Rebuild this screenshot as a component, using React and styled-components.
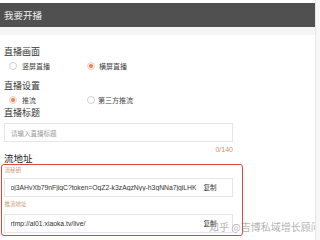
import React from "react";
import styled, { createGlobalStyle } from "styled-components";

const GlobalStyle = createGlobalStyle`
  body {
    margin: 0;
    background: #f7f7f7;
    font-family: "Noto Sans CJK SC", "Noto Sans", sans-serif;
  }
`;

const Page = styled.div`
  width: 316px;
  height: 240px;
  padding-top: 3px;
  box-sizing: border-box;
  background: #fff;
  border-right: 1px solid #e6e6e6;
  position: relative;
  overflow: hidden;
`;

const Header = styled.div`
  height: 24px;
  background: #505050;
  color: #f2f2f2;
  font-size: 9.5px;
  display: flex;
  align-items: center;
  padding-left: 4px;
`;

const SubBar = styled.div`
  height: 8px;
  background: #f6f5f6;
`;

const Content = styled.div`
  padding: 0 4px;
`;

const Label = styled.div`
  font-size: 9px;
  color: #333;
  line-height: 14px;
  height: 14px;
  margin-top: ${(p) => p.top || 0}px;
`;

const RadioRow = styled.div`
  display: flex;
  padding-left: 5px;
  height: 14px;
  align-items: center;
`;

const RadioItem = styled.div`
  width: 78px;
  display: flex;
  align-items: center;
  font-size: 7px;
  color: #444;
`;

const Circle = styled.span`
  width: 8px;
  height: 8px;
  box-sizing: border-box;
  border-radius: 50%;
  border: 1px solid ${(p) => (p.on ? "#f3d2c0" : "#cfcfcf")};
  background: ${(p) => (p.on ? "#fcece3" : "#fff")};
  display: flex;
  align-items: center;
  justify-content: center;
  margin-right: ${(p) => p.gap}px;
  &::after {
    content: "";
    display: ${(p) => (p.on ? "block" : "none")};
    width: 4px;
    height: 4px;
    border-radius: 50%;
    background: #db8761;
  }
`;

const Input = styled.div`
  width: 229px;
  height: 19px;
  box-sizing: border-box;
  border: 1px solid #e6e6e6;
  display: flex;
  align-items: center;
  padding-left: 6px;
  font-size: ${(p) => (p.latin ? 6.8 : 6.5)}px;
  color: ${(p) => (p.muted ? "#9a9a9a" : "#333")};
  margin-top: ${(p) => p.top || 0}px;
  white-space: nowrap;
  overflow: hidden;
  font-family: ${(p) => (p.latin ? '"Liberation Sans", Arial, sans-serif' : "inherit")};
`;

const Count = styled.div`
  width: 229px;
  text-align: right;
  font-size: 7px;
  color: #c99372;
  margin-top: 3px;
  line-height: 10px;
  height: 10px;
  font-family: "Liberation Sans", Arial, sans-serif;
`;

const Title = styled.div`
  font-size: 9.5px;
  color: #222;
  line-height: 12px;
  height: 12px;
  margin-top: -3px;
`;

const RedBox = styled.div`
  margin-left: -3px;
  width: 242px;
  height: 72px;
  box-sizing: border-box;
  border: 1.5px solid #e0483c;
  border-radius: 3px;
  padding: 0.5px 0 0 1.5px;
`;

const SmallLabel = styled.div`
  font-size: 5.5px;
  color: #d09a7a;
  line-height: 8px;
  height: 8px;
  margin-top: ${(p) => p.top || 0}px;
  padding-left: 1px;
`;

const Value = styled.span`
  flex: 1;
  overflow: hidden;
`;

const Copy = styled.span`
  width: 28px;
  flex-shrink: 0;
  font-size: 6.5px;
  color: #333;
  font-family: "Noto Sans CJK SC", sans-serif;
`;

const Watermark = styled.div`
  position: absolute;
  left: 209px;
  top: 220px;
  font-size: 10px;
  line-height: 14px;
  color: rgba(125, 125, 125, 0.6);
  white-space: nowrap;
`;

export default function App() {
  return (
    <>
      <GlobalStyle />
      <Page>
        <Header>我要开播</Header>
        <SubBar />
        <Content>
          <Label top={10}>直播画面</Label>
          <RadioRow>
            <RadioItem><Circle gap={5} />竖屏直播</RadioItem>
            <RadioItem><Circle on gap={4} />横屏直播</RadioItem>
          </RadioRow>
          <Label top={6}>直播设置</Label>
          <RadioRow>
            <RadioItem><Circle on gap={5} />推流</RadioItem>
            <RadioItem><Circle gap={3} />第三方推流</RadioItem>
          </RadioRow>
          <Label top={-1}>直播标题</Label>
          <Input muted top={3}>请输入直播标题</Input>
          <Count>0/140</Count>
          <Title>流地址</Title>
          <RedBox>
            <SmallLabel>流秘钥</SmallLabel>
            <Input latin top={4}>
              <Value>oj3AHvXb79nFjiqC?token=OqZ2-k3zAqzNyy-h3gNNa7jgiLHK</Value>
              <Copy>复制</Copy>
            </Input>
            <SmallLabel top={3}>推流地址</SmallLabel>
            <Input latin top={6}>
              <Value>rtmp://al01.xiaoka.tv/live/</Value>
              <Copy>复制</Copy>
            </Input>
          </RedBox>
        </Content>
        <Watermark>知乎 @吉博私域增长顾问</Watermark>
      </Page>
    </>
  );
}
